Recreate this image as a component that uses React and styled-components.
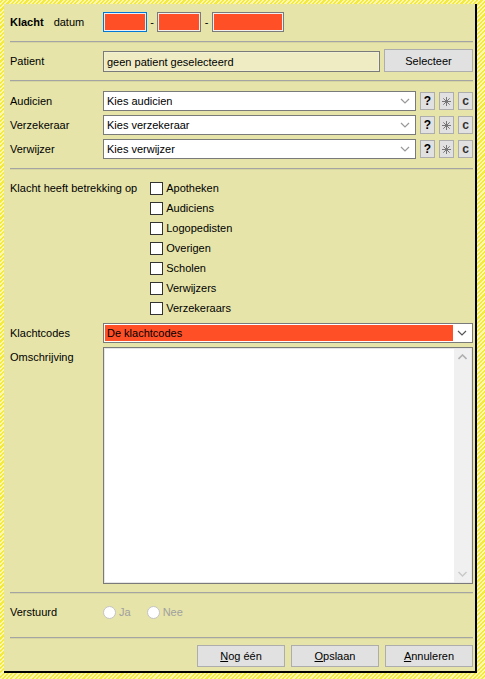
import styled, { createGlobalStyle } from "styled-components";

const Global = createGlobalStyle`
  html, body {
    margin: 0;
    padding: 0;
  }
  body {
    font-family: "Liberation Sans", Arial, sans-serif;
    font-size: 11px;
    color: #000;
  }
`;

const Frame = styled.div`
  width: 485px;
  height: 679px;
  box-sizing: border-box;
  padding: 4px 8px 6px 4px;
  background: repeating-linear-gradient(
    -45deg,
    #fbf7b0 0 1.5px,
    #f3ea3c 1.5px 3px
  );
`;

const Panel = styled.div`
  height: 100%;
  box-sizing: border-box;
  background: #e6e4a9;
  border-right: 2px solid #000;
  border-bottom: 2px solid #000;
  padding: 8px 2px 0 6px;
  display: flex;
  flex-direction: column;
`;

const Row = styled.div`
  display: flex;
  align-items: center;
  height: ${(p) => p.$h || 20}px;
  margin-top: ${(p) => p.$mt || 0}px;
`;

const Label = styled.div`
  width: ${(p) => (p.$auto ? "auto" : "93px")};
  flex: none;
  display: flex;
  align-items: center;
  gap: 10px;
  align-self: ${(p) => (p.$top ? "flex-start" : "center")};
  padding-top: ${(p) => (p.$top ? 4 : 0)}px;
`;

const Strong = styled.span`
  font-weight: bold;
`;

const Separator = styled.div`
  height: 2px;
  margin-top: ${(p) => p.$mt}px;
  background: #a4a4a4;
  border-bottom: 1px solid #d6d4a0;
  box-sizing: border-box;
`;

const DateBox = styled.div`
  width: ${(p) => p.$w}px;
  height: 20px;
  box-sizing: border-box;
  background: #ff4f26;
  border: 1px solid ${(p) => (p.$focus ? "#0078d7" : "#7a7a7a")};
  box-shadow: inset 0 0 0 1px ${(p) => (p.$focus ? "#e8f0f8" : "#f0f0f0")};
`;

const Dash = styled.span`
  width: ${(p) => p.$w}px;
  text-align: center;
  flex: none;
`;

const TextField = styled.div`
  width: 277px;
  height: 21px;
  box-sizing: border-box;
  align-self: flex-end;
  background: #efecc4;
  border: 1px solid #7a7a7a;
  box-shadow: inset 0 0 0 1px #f2f0d4;
  padding: 0 3px;
  display: flex;
  align-items: center;
`;

const Button = styled.button`
  font: inherit;
  color: #000;
  width: ${(p) => p.$w}px;
  height: ${(p) => p.$h || 22}px;
  margin-left: ${(p) => p.$ml || 0}px;
  padding: 0;
  box-sizing: border-box;
  background: #e1e1e1;
  border: 1px solid #adadad;
  display: flex;
  align-items: center;
  justify-content: center;
  flex: none;
  u {
    text-decoration: underline;
  }
`;

const Select = styled.div`
  width: ${(p) => p.$w}px;
  height: 20px;
  box-sizing: border-box;
  background: #fff;
  border: 1px solid #7a7a7a;
  padding: 1px;
  display: flex;
  align-items: center;
  flex: none;
`;

const SelectValue = styled.div`
  flex: 1;
  height: 100%;
  display: flex;
  align-items: center;
  padding-left: 2px;
  background: ${(p) => p.$bg || "transparent"};
`;

const Chevron = styled.svg`
  width: 18px;
  flex: none;
`;

const SmallButton = styled(Button)`
  width: 15px;
  height: 18px;
  margin-left: ${(p) => p.$ml}px;
  font-weight: bold;
  font-size: 12px;
  color: ${(p) => p.$c || "#000"};
`;

const CheckList = styled.div`
  display: flex;
  flex-direction: column;
  margin-left: ${(p) => p.$ml}px;
`;

const CheckRow = styled.label`
  height: 20px;
  display: flex;
  align-items: center;
  gap: 3px;
`;

const Box = styled.span`
  width: 13px;
  height: 13px;
  box-sizing: border-box;
  border: 1px solid #333;
  background: #fff;
`;

const Section = styled.div`
  display: flex;
  margin-top: ${(p) => p.$mt}px;
`;

const TextArea = styled.div`
  width: 370px;
  height: 237px;
  box-sizing: border-box;
  background: #fff;
  border: 1px solid #7a7a7a;
  box-shadow: inset 0 0 0 1px #e6e6e6;
  padding: 1px;
  display: flex;
  justify-content: flex-end;
`;

const Scrollbar = styled.div`
  width: 17px;
  height: 100%;
  background: #f0f0f0;
  display: flex;
  flex-direction: column;
  justify-content: space-between;
  align-items: center;
  padding: 5px 0;
  box-sizing: border-box;
`;

const Radio = styled.label`
  display: flex;
  align-items: center;
  gap: 3px;
  color: #a0a0a0;
  margin-right: ${(p) => p.$mr || 0}px;
`;

const Circle = styled.span`
  width: 13px;
  height: 13px;
  border-radius: 50%;
  box-sizing: border-box;
  border: 1px solid #c4c4c4;
  background: #fff;
`;

const Footer = styled.div`
  display: flex;
  justify-content: flex-end;
  gap: 6px;
  margin-top: 6px;
`;

const Down = ({ color = "#999" }) => (
  <Chevron height="8" viewBox="0 0 18 8">
    <path d="M5 2 L9 6 L13 2" fill="none" stroke={color} strokeWidth="1.2" />
  </Chevron>
);

const Star = () => (
  <svg width="9" height="9" viewBox="0 0 9 9">
    <g stroke="#777" strokeWidth="1">
      <path d="M4.5 0 V9 M0 4.5 H9 M1.3 1.3 L7.7 7.7 M7.7 1.3 L1.3 7.7" />
    </g>
  </svg>
);

const PickRow = ({ label, value, mt }) => (
  <Row $mt={mt}>
    <Label>{label}</Label>
    <Select $w={313}>
      <SelectValue>{value}</SelectValue>
      <Down />
    </Select>
    <SmallButton $ml={4}>?</SmallButton>
    <SmallButton $ml={4}>
      <Star />
    </SmallButton>
    <SmallButton $ml={4} $c="#333">
      c
    </SmallButton>
  </Row>
);

const options = [
  "Apotheken",
  "Audiciens",
  "Logopedisten",
  "Overigen",
  "Scholen",
  "Verwijzers",
  "Verzekeraars",
];

export default function App() {
  return (
    <>
      <Global />
      <Frame>
        <Panel>
          <Row>
            <Label>
              <Strong>Klacht</Strong>
              <span>datum</span>
            </Label>
            <DateBox $w={44} $focus />
            <Dash $w={10}>-</Dash>
            <DateBox $w={44} />
            <Dash $w={11}>-</Dash>
            <DateBox $w={72} />
          </Row>
          <Separator $mt={9} />
          <Row $h={23} $mt={6}>
            <Label>Patient</Label>
            <TextField>geen patient geselecteerd</TextField>
            <Button $w={89} $h={23} $ml={4}>
              Selecteer
            </Button>
          </Row>
          <Separator $mt={8} />
          <PickRow label="Audicien" value="Kies audicien" mt={9} />
          <PickRow label="Verzekeraar" value="Kies verzekeraar" mt={4} />
          <PickRow label="Verwijzer" value="Kies verwijzer" mt={4} />
          <Separator $mt={9} />
          <Section $mt={8}>
            <Label $top $auto>
              Klacht heeft betrekking op
            </Label>
            <CheckList $ml={13}>
              {options.map((o) => (
                <CheckRow key={o}>
                  <Box />
                  {o}
                </CheckRow>
              ))}
            </CheckList>
          </Section>
          <Row $mt={5}>
            <Label>Klachtcodes</Label>
            <Select $w={370}>
              <SelectValue $bg="#ff4f26">De klachtcodes</SelectValue>
              <Down color="#555" />
            </Select>
          </Row>
          <Section $mt={4}>
            <Label $top>Omschrijving</Label>
            <TextArea>
              <Scrollbar>
                <svg width="9" height="6" viewBox="0 0 9 6">
                  <path d="M0.5 5 L4.5 1 L8.5 5" fill="none" stroke="#b0b0b0" strokeWidth="1.6" />
                </svg>
                <svg width="9" height="6" viewBox="0 0 9 6">
                  <path d="M0.5 1 L4.5 5 L8.5 1" fill="none" stroke="#c8c8c8" strokeWidth="1.4" />
                </svg>
              </Scrollbar>
            </TextArea>
          </Section>
          <Separator $mt={8} />
          <Row $h={20} $mt={8}>
            <Label>Verstuurd</Label>
            <Radio $mr={16}>
              <Circle />
              Ja
            </Radio>
            <Radio>
              <Circle />
              Nee
            </Radio>
          </Row>
          <Separator $mt={15} />
          <Footer>
            <Button $w={88}>
              <span>
                <u>N</u>og één
              </span>
            </Button>
            <Button $w={88}>
              <span>
                <u>O</u>pslaan
              </span>
            </Button>
            <Button $w={88}>
              <span>
                <u>A</u>nnuleren
              </span>
            </Button>
          </Footer>
        </Panel>
      </Frame>
    </>
  );
}
